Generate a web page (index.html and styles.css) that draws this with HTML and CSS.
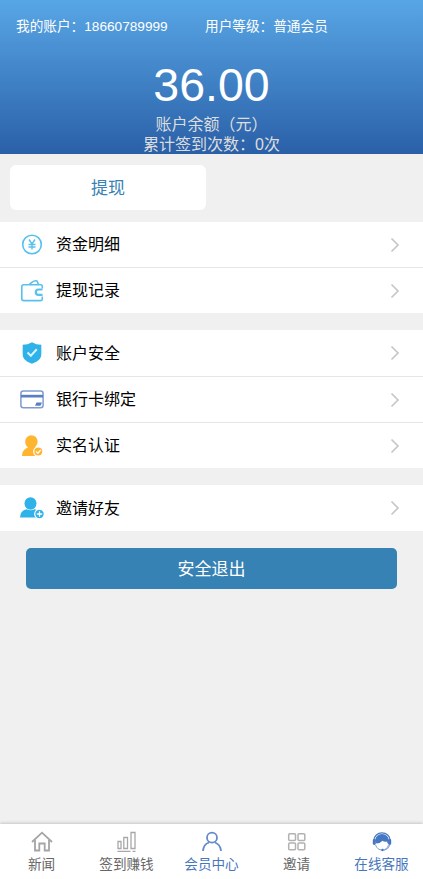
FILE: index.html
```html
<!DOCTYPE html>
<html lang="zh-CN">
<head>
<meta charset="utf-8">
<meta name="viewport" content="width=device-width, initial-scale=1">
<title>会员中心</title>
<link rel="stylesheet" href="styles.css">
</head>
<body>
<header class="account">
  <div class="account-info"><span>我的账户：18660789999</span><span>用户等级：普通会员</span></div>
  <div class="balance">36.00</div>
  <div class="caption">账户余额（元）</div>
  <div class="caption">累计签到次数：0次</div>
</header>
<main>
  <a class="withdraw">提现</a>
  <section class="group">
    <a class="row first"><svg class="icon" viewBox="0 0 24 24" fill="none" stroke="#57c1ec"><circle cx="12" cy="11.500" r="9.300" stroke-width="1.600"/><path d="M9 6.500l3 4.500 3-4.500M8.500 11.500h7M8.500 14h7M12 11v5.500" stroke-width="1.400"/></svg><span>资金明细</span><svg class="arrow" viewBox="0 0 10 16"><path d="M1.500 1.500L8 8l-6.500 6.500"/></svg></a>
    <a class="row last"><svg class="icon" viewBox="0 0 24 24" fill="none" stroke="#57c1ec" stroke-width="1.600"><path d="M22.300 9.500V7.500Q22.300 5.800 20.600 5.800H3.700Q1.800 5.800 1.800 7.700v12Q1.800 21.600 3.700 21.600h16.900Q22.300 21.600 22.300 20v-2.500M9.500 5.300Q14.500.8 17 2l1.500 3.300"/><path d="M22.500 10.500h-4a2.700 2.700 0 0 0 0 5.400h4" stroke-width="2.200"/></svg><span>提现记录</span><svg class="arrow" viewBox="0 0 10 16"><path d="M1.500 1.500L8 8l-6.500 6.500"/></svg></a>
  </section>
  <section class="group">
    <a class="row top"><svg class="icon" viewBox="0 0 24 24"><path d="M12 1.300Q16 3.800 21.300 3.800v9.700c0 5-4.800 7.500-9.300 9.300-4.500-1.800-9.300-4.300-9.300-9.300V3.800q5.300 0 9.300-2.500z" fill="#2fb1e9"/><path d="M7.500 11.500l3.300 3.200 6-6.500" fill="none" stroke="#d9f3ff" stroke-width="2"/></svg><span>账户安全</span><svg class="arrow" viewBox="0 0 10 16"><path d="M1.500 1.500L8 8l-6.500 6.500"/></svg></a>
    <a class="row"><svg class="icon" viewBox="0 0 24 24"><rect x=".9" y="3" width="22.200" height="16.800" rx="2.500" fill="#fff" stroke="#809bcf" stroke-width="1.500"/><path d="M1 6.800h22v2.700H1z" fill="#587fc4"/><path d="M16.500 14.500h5.500l-1.500 3.200H15z" fill="#587fc4"/></svg><span>银行卡绑定</span><svg class="arrow" viewBox="0 0 10 16"><path d="M1.500 1.500L8 8l-6.500 6.500"/></svg></a>
    <a class="row last"><svg class="icon" viewBox="0 0 24 24" fill="#ffb52f"><path d="M5.200 7.500a6.200 6.200 0 0 1 12.400 0c0 2.700-1.300 4.200-2.300 5.200q1.200 1 2.700 1.200v8H2q0-6.500 6-8.500-2.800-1.800-2.800-5.900z"/><circle cx="18.300" cy="17.500" r="4.600" stroke="#fff" stroke-width="1.200"/><path d="M15.900 17.400l1.900 1.900 3-3.400" fill="none" stroke="#fff" stroke-width="1.300"/></svg><span>实名认证</span><svg class="arrow" viewBox="0 0 10 16"><path d="M1.500 1.500L8 8l-6.500 6.500"/></svg></a>
  </section>
  <section class="group">
    <a class="row single"><svg class="icon" viewBox="0 0 24 24" fill="#2fb1e9"><ellipse cx="10.500" cy="7.500" rx="6" ry="6.200"/><path d="M0 21.500q.2-7 6.500-8.300 4 2 8 0 3 .5 3.500 2v6.300z"/><circle cx="19.500" cy="18" r="4.800" stroke="#fff" stroke-width="1.200"/><path d="M16.800 18h5.400M19.500 15.300v5.400" stroke="#fff" stroke-width="1.300"/></svg><span>邀请好友</span><svg class="arrow" viewBox="0 0 10 16"><path d="M1.500 1.500L8 8l-6.500 6.500"/></svg></a>
  </section>
  <button class="logout">安全退出</button>
</main>
<nav class="tabs">
  <a><svg viewBox="0 0 22 22" fill="none" stroke="#a5a5a5" stroke-width="1.800"><path d="M1 12L11 2.700 21 12M4 10v10.500h4.300v-7h5.400v7H18V10"/></svg><span>新闻</span></a>
  <a><svg viewBox="0 0 22 22" fill="none" stroke="#a8a8a8" stroke-width="1.300"><path d="M2 11.500h3v7H2zM7.800 7.500h3.700v11H7.800zM15 2.500h4v16h-4zM1.500 21.300h13M16.500 21.300h3"/></svg><span>签到赚钱</span></a>
  <a class="active"><svg viewBox="0 0 22 22" fill="none" stroke="#648bc9" stroke-width="1.800"><circle cx="11" cy="7.700" r="5"/><path d="M2 21q.5-6.700 6-8.500M14 12.500q5.500 2 6 8.500"/></svg><span>会员中心</span></a>
  <a><svg viewBox="0 0 22 22" fill="none" stroke="#b2b2b2" stroke-width="1.500"><rect x="2.700" y="3.700" width="6.800" height="6.700" rx="1"/><rect x="12" y="3.700" width="6.800" height="6.700" rx="1"/><rect x="2.700" y="13" width="6.800" height="6.700" rx="1"/><rect x="12" y="13" width="6.800" height="6.700" rx="1"/></svg><span>邀请</span></a>
  <a class="active"><svg viewBox="0 0 22 22"><path d="M3 10a8 7.200 0 0 1 16 0" fill="none" stroke="#4c7ac1" stroke-width="1.300"/><path d="M4 11a7 7 0 0 1 14 0l-.5 3.500q-1-1.200-1.500-3-2.500 1-4.500-.8-2.500 2.800-6 2.800z" fill="#4577c2"/><rect x="1.800" y="9" width="3" height="6" rx="1.400" fill="#4577c2"/><rect x="17.200" y="9" width="3" height="6" rx="1.400" fill="#4577c2"/><path d="M4.500 15q2 5 6.500 5 5 0 6.500-5M13 20.300q4.500-.8 6-5.500" fill="none" stroke="#7d9fd3"/><circle cx="11.500" cy="20" r="1.200" fill="#4577c2"/></svg><span>在线客服</span></a>
</nav>
</body>
</html>
```
FILE: styles.css
```css
* { box-sizing: border-box; }
body {
  margin: 0;
  min-height: 879px;
  display: flex;
  flex-direction: column;
  background: #f0f0f0;
  color: #000;
  font-family: "Liberation Sans", "Noto Sans CJK SC", sans-serif;
  font-size: 16px;
}
.account {
  height: 154px;
  padding-top: 17px;
  background: linear-gradient(#58a6e6, #2a60a8);
  color: #fff;
  text-align: center;
}
.account-info {
  display: grid;
  grid-template-columns: 189px 1fr;
  padding-left: 16px;
  font-size: 13.65px;
  line-height: 20px;
  text-align: left;
}
.balance { height: 78px; font-size: 46.5px; line-height: 97px; }
.caption { height: 20px; line-height: 20px; color: #ddd; }
main { flex: 1; }
.withdraw {
  display: block;
  width: 196px;
  height: 45px;
  margin: 11px 0 12px 10px;
  border-radius: 6px;
  background: #fff;
  color: #3682b5;
  font-size: 17px;
  line-height: 47px;
  text-align: center;
}
.group { margin-bottom: 17px; background: #fff; }
.row {
  display: flex;
  align-items: center;
  height: 46px;
  padding: 0 23px 0 20px;
  border-bottom: 1px solid #e5e5e5;
}
.row span { padding-bottom: 3px; }
.row.top { height: 47px; }
.row.last { height: 45px; border-bottom: 0; }
.row.single { border-bottom: 0; }
.icon { width: 24px; height: 24px; margin-right: 12px; }
.arrow {
  width: 10px;
  height: 16px;
  margin-left: auto;
  fill: none;
  stroke: #c7c7c7;
  stroke-width: 1.7;
}
.logout {
  display: block;
  width: 371px;
  height: 41px;
  margin: 0 auto;
  padding: 0 0 3px;
  border: 0;
  border-radius: 5px;
  background: #3682b5;
  color: #fff;
  font: inherit;
  font-size: 17px;
}
.tabs {
  display: grid;
  grid-template-columns: repeat(5, 85px);
  justify-content: center;
  height: 55px;
  background: #fff;
  box-shadow: 0 -1px 3px rgba(0, 0, 0, .18);
  color: #666;
  font-size: 13.6px;
}
.tabs a { display: flex; flex-direction: column; align-items: center; padding-top: 6px; }
.tabs svg { width: 22px; height: 22px; }
.tabs span { line-height: 20px; margin-top: 3px; }
.tabs .active { color: #4876bd; }
```
